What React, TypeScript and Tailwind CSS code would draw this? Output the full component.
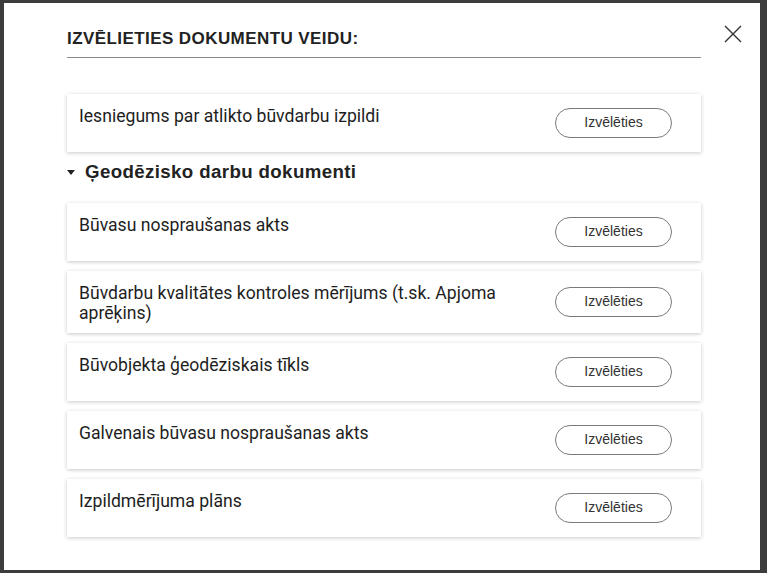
import React from "react";

const topDoc = "Iesniegums par atlikto būvdarbu izpildi";

const geoDocs = [
  "Būvasu nospraušanas akts",
  "Būvdarbu kvalitātes kontroles mērījums (t.sk. Apjoma aprēķins)",
  "Būvobjekta ģeodēziskais tīkls",
  "Galvenais būvasu nospraušanas akts",
  "Izpildmērījuma plāns",
];

function DocCard({ title }: { title: string }) {
  return (
    <div className="mb-2.5 flex min-h-[58px] items-center justify-between gap-5 bg-white pb-2.5 pl-3 pr-[29px] pt-3 shadow-[0_1px_4px_rgba(0,0,0,0.22)]">
      <div className="flex-1 self-start font-['Roboto',sans-serif] text-[17.6px] leading-5 text-[#1e1e1e]">
        {title}
      </div>
      <button className="mb-[3px] h-[30px] w-[117px] shrink-0 rounded-full border border-[#7a7a7a] bg-white font-['Liberation_Sans',Arial,sans-serif] text-[14px] text-[#333]">
        Izvēlēties
      </button>
    </div>
  );
}

export default function App() {
  return (
    <div className="h-[573px] w-[767px] overflow-hidden bg-[#3c3c3c] pl-[4px] pt-[3px]">
      <div className="relative h-[567px] w-[756px] bg-white pl-[63px] pr-[59px] pt-[26px]">
        <button className="absolute right-[18px] top-[22px] text-[#333]">
          <svg width="18" height="18" viewBox="0 0 18 18">
            <path d="M1 1 L17 17 M17 1 L1 17" stroke="currentColor" strokeWidth="1.4" fill="none" />
          </svg>
        </button>

        <div className="border-b border-[#8a8a8a] pb-2">
          <h2 className="font-['Liberation_Sans',Arial,sans-serif] text-[17px] font-bold uppercase leading-5 tracking-[0.025em] text-[#222]">
            IZVĒLIETIES DOKUMENTU VEIDU:
          </h2>
        </div>

        <div className="mt-9">
          <DocCard title={topDoc} />
        </div>

        <div className="mb-[19px] mt-[-2px] flex items-center gap-2.5">
          <svg width="8" height="5" viewBox="0 0 8 5" className="shrink-0">
            <path d="M0 0 L8 0 L4 5 Z" fill="#222" />
          </svg>
          <h3 className="font-['Liberation_Sans',Arial,sans-serif] text-[18.7px] font-bold leading-6 tracking-[0.02em] text-[#222]">
            Ģeodēzisko darbu dokumenti
          </h3>
        </div>

        {geoDocs.map((doc) => (
          <DocCard key={doc} title={doc} />
        ))}
      </div>
    </div>
  );
}
